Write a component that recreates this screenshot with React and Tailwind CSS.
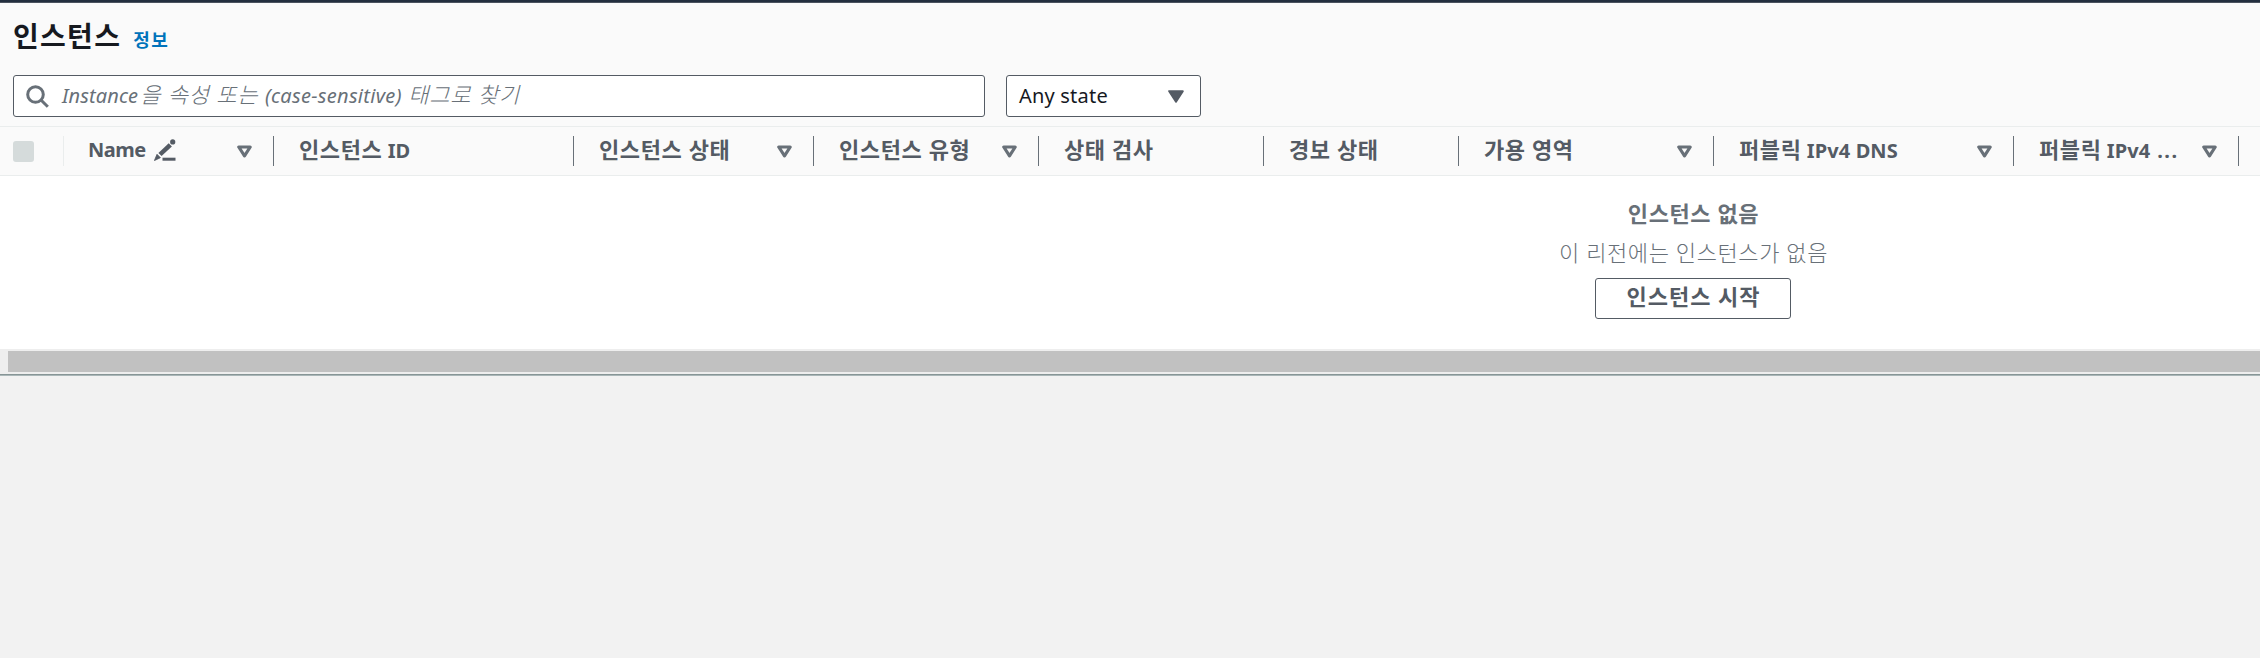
const columns = [
  { label: 'Name', width: 'w-[210px]', sort: true, edit: true },
  { label: '인스턴스 ID', width: 'w-[300px]' },
  { label: '인스턴스 상태', width: 'w-[240px]', sort: true },
  { label: '인스턴스 유형', width: 'w-[225px]', sort: true },
  { label: '상태 검사', width: 'w-[225px]' },
  { label: '경보 상태', width: 'w-[195px]' },
  { label: '가용 영역', width: 'w-[255px]', sort: true },
  { label: '퍼블릭 IPv4 DNS', width: 'w-[300px]', sort: true },
  { label: '퍼블릭 IPv4 ...', width: 'w-[225px]', sort: true },
];

function wordStyle(word) {
  if (word === '...') return 'tracking-[1.6px]';
  if (word === 'Name') return 'tracking-[-0.5px]';
  if (/^[A-Za-z0-9]+$/.test(word)) return 'tracking-[0.1px]';
  return 'text-[22px] tracking-[0.6px]';
}

function Label({ text }) {
  return text.split(' ').map((word, i) => (
    <span key={i} className={wordStyle(word)}>
      {i > 0 ? ' ' : ''}
      {word}
    </span>
  ));
}

function SearchIcon() {
  return (
    <svg className="h-[23px] w-[23px] shrink-0" viewBox="0 0 23 23" fill="none" stroke="#687078" strokeWidth="3">
      <circle cx="9.5" cy="9.5" r="7.8" />
      <path d="M15 15l6.8 6.8" />
    </svg>
  );
}

function PencilIcon() {
  return (
    <svg className="h-[22px] w-[22px] shrink-0" viewBox="0 0 22 22" fill="#545b64">
      <path d="M14.7 4.2l3.2 3.2L7.6 17.1l-3.2-3.2z" />
      <path d="M3 15.3l3.4 3.4L0.4 21.6z" stroke="#545b64" strokeWidth=".8" strokeLinejoin="round" />
      <circle cx="18.7" cy="2.9" r="2.6" />
      <rect x="8.5" y="18.7" width="13" height="3" />
    </svg>
  );
}

function SortIcon() {
  return (
    <svg className="h-[13px] w-[15px] shrink-0" viewBox="0 0 15 13" fill="none" stroke="#687078" strokeWidth="3.2" strokeLinejoin="round">
      <path d="M1.8 2h11.4l-5.7 8.9z" />
    </svg>
  );
}

export default function App() {
  return (
    <div className="flex h-[658px] w-[2260px] flex-col overflow-hidden bg-[#f2f2f2] font-['Noto_Sans','Noto_Sans_CJK_KR',sans-serif] text-[20px] text-[#545b64]">
      <div className="h-[3px] shrink-0 border-b border-[#4b535f] bg-[#232f3e]" />
      <header className="flex h-[123px] shrink-0 flex-col bg-[#fafafa] pl-[13px]">
        <div className="flex h-[72px] items-baseline gap-[12px] pt-[13px]">
          <h1 className="text-[28px] font-bold leading-[40px] tracking-[1.3px] text-[#16191f]">인스턴스</h1>
          <a className="text-[18px] font-bold leading-[24px] tracking-[1.4px] text-[#0073bb]">정보</a>
        </div>
        <div className="flex gap-[21px]">
          <div className="flex h-[42px] w-[972px] items-center gap-[13px] rounded-[3px] border border-[#545b64] bg-white pl-[12px]">
            <SearchIcon />
            <span className="whitespace-nowrap pb-[2px] text-[22px] font-light italic leading-[38px] tracking-[0.8px] text-[#687078]">
              <span className="mr-[2px] text-[20px] font-normal tracking-[0.1px]">Instance</span>을 속성 또는{' '}
              <span className="text-[20px] font-normal tracking-[0.3px]">(case-sensitive)</span> 태그로 찾기
            </span>
          </div>
          <div className="flex h-[42px] w-[195px] items-center justify-between rounded-[3px] border border-[#545b64] bg-white pl-[12px] pr-[16px] text-[#16191f]">
            <span className="tracking-[0.2px]">Any state</span>
            <svg className="h-[13px] w-[16px]" viewBox="0 0 16 13" fill="#545b64" stroke="#545b64" strokeWidth="2" strokeLinejoin="round">
              <path d="M1.2 1.2h13.6L8 11.6z" />
            </svg>
          </div>
        </div>
      </header>
      <div className="flex h-[50px] shrink-0 items-center border-y border-[#eaeded] bg-[#fafafa]">
        <div className="flex h-[30px] w-[64px] items-center border-r border-[#eaeded] pl-[13px]">
          <span className="h-[21px] w-[21px] rounded-[3px] bg-[#d5dbdb]" />
        </div>
        {columns.map((c) => (
          <div
            key={c.label}
            className={`flex h-[30px] shrink-0 items-center justify-between border-r border-[#687078] pr-[21px] ${c.edit ? 'pl-[24px]' : 'pl-[25px]'} ${c.width}`}
          >
            <div className="flex items-center gap-[8px] whitespace-pre pb-[3px] font-bold leading-[27px]">
              <span><Label text={c.label} /></span>
              {c.edit && <PencilIcon />}
            </div>
            {c.sort && <SortIcon />}
          </div>
        ))}
      </div>
      <div className="flex h-[173px] shrink-0 flex-col items-center bg-white pl-[1125px] pt-[18px] text-[22px] text-[#687078]">
        <strong className="pl-[2px] font-bold leading-[38px] tracking-[0.6px]">인스턴스 없음</strong>
        <span className="pl-[2px] font-light leading-[40px] tracking-[0.6px]">이 리전에는 인스턴스가 없음</span>
        <button className="mt-[6px] flex h-[41px] w-[196px] shrink-0 items-center justify-center rounded-[3px] border border-[#545b64] pb-[5px] pl-[2px] font-bold tracking-[1px] text-[#545b64]">
          인스턴스 시작
        </button>
      </div>
      <div className="h-[25px] shrink-0 bg-[#eeeeee] pl-[8px] pt-[2px]">
        <div className="h-[21px] bg-[#c1c1c1]" />
      </div>
      <div className="h-[2px] shrink-0 border-t border-[#879596] bg-[#aab7b8]" />
    </div>
  );
}
